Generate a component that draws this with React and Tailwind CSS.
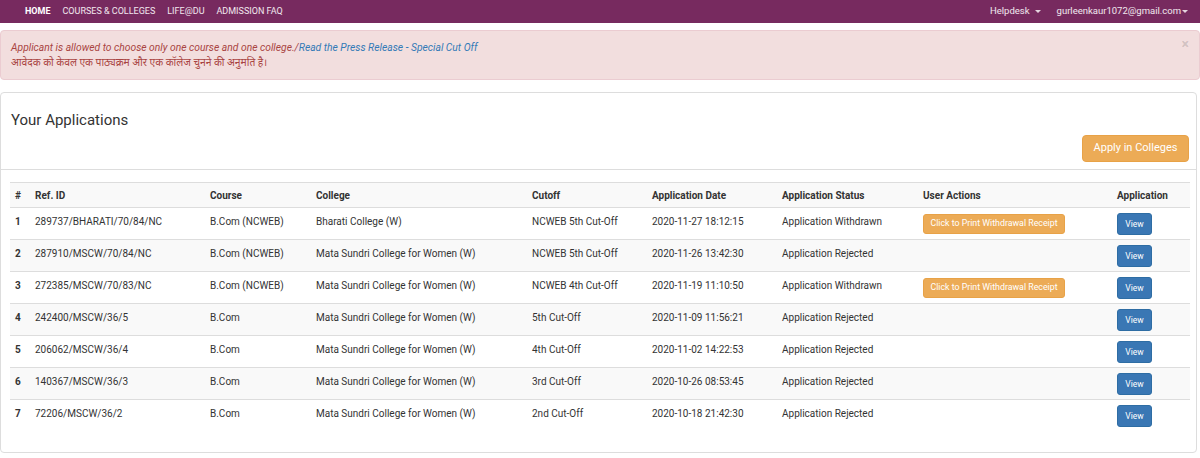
import { useState } from 'react';

// Bootstrap-3 flavoured "Your Applications" dashboard.

const NAV_LEFT = ['HOME', 'COURSES & COLLEGES', 'LIFE@DU', 'ADMISSION FAQ'];

const ROWS = [
  { ref: '289737/BHARATI/70/84/NC', course: 'B.Com (NCWEB)', college: 'Bharati College (W)', cutoff: 'NCWEB 5th Cut-Off', date: '2020-11-27 18:12:15', status: 'Application Withdrawn', receipt: true },
  { ref: '287910/MSCW/70/84/NC', course: 'B.Com (NCWEB)', college: 'Mata Sundri College for Women (W)', cutoff: 'NCWEB 5th Cut-Off', date: '2020-11-26 13:42:30', status: 'Application Rejected' },
  { ref: '272385/MSCW/70/83/NC', course: 'B.Com (NCWEB)', college: 'Mata Sundri College for Women (W)', cutoff: 'NCWEB 4th Cut-Off', date: '2020-11-19 11:10:50', status: 'Application Withdrawn', receipt: true },
  { ref: '242400/MSCW/36/5', course: 'B.Com', college: 'Mata Sundri College for Women (W)', cutoff: '5th Cut-Off', date: '2020-11-09 11:56:21', status: 'Application Rejected' },
  { ref: '206062/MSCW/36/4', course: 'B.Com', college: 'Mata Sundri College for Women (W)', cutoff: '4th Cut-Off', date: '2020-11-02 14:22:53', status: 'Application Rejected' },
  { ref: '140367/MSCW/36/3', course: 'B.Com', college: 'Mata Sundri College for Women (W)', cutoff: '3rd Cut-Off', date: '2020-10-26 08:53:45', status: 'Application Rejected' },
  { ref: '72206/MSCW/36/2', course: 'B.Com', college: 'Mata Sundri College for Women (W)', cutoff: '2nd Cut-Off', date: '2020-10-18 21:42:30', status: 'Application Rejected' },
];

const HEADS = ['#', 'Ref. ID', 'Course', 'College', 'Cutoff', 'Application Date', 'Application Status', 'User Actions', 'Application'];
const WIDTHS = [20, 175, 106, 216, 120, 130, 141, 194, 78];

function Caret({ gap = 'ml-[5px]' }) {
  return <span className={`inline-block ${gap} align-middle border-t-[3px] border-x-[3px] border-x-transparent border-t-white/80`} />;
}

export default function App() {
  const [showAlert, setShowAlert] = useState(true);

  return (
    <div className="w-[1200px] h-[458px] overflow-hidden bg-white text-[#333] font-['Roboto','Noto_Sans','Noto_Sans_Devanagari',sans-serif]">
      {/* Top navbar */}
      <nav className="h-[23px] bg-[#772a5f] flex items-center justify-between pl-[25px] pr-[12px] text-white text-[9px]">
        <div className="flex items-center gap-[12px]">
          {NAV_LEFT.map((n, i) => (
            <a key={n} className={i === 0 ? 'font-bold text-white' : 'text-white/90'}>{n}</a>
          ))}
        </div>
        <div className="flex items-center gap-[16px] text-[9.5px]">
          <a className="text-white/90">Helpdesk<Caret /></a>
          <a className="text-white/90">gurleenkaur1072@gmail.com<Caret gap="ml-[1px]" /></a>
        </div>
      </nav>

      <div className="pt-[7px]">
        {showAlert && (
          <div className="relative h-[50px] bg-[#f2dede] border border-[#ebccd1] rounded-[4px] pl-[10px] pt-[9px] italic text-[#a94442] text-[10.3px] leading-[15px]">
            <p>
              Applicant is allowed to choose only one course and one college./
              <a className="text-[#337ab7]">Read the Press Release - Special Cut Off</a>
            </p>
            <p>आवेदक को केवल एक पाठ्यक्रम और एक कॉलेज चुनने की अनुमति है।</p>
            <button
              onClick={() => setShowAlert(false)}
              className="absolute right-[10px] top-[6px] not-italic font-bold text-[14px] text-black/15"
            >
              ×
            </button>
          </div>
        )}

        {/* Applications panel */}
        <div className="mt-[12px] mr-[3px] border border-[#ddd] rounded-[4px] h-[361px]">
          <div className="h-[77px] border-b border-[#ddd] px-[10px] pt-[17px] flex flex-col">
            <h3 className="text-[15px] leading-[20px] text-[#333]">Your Applications</h3>
            <div className="flex justify-end mt-[5px]">
              <button className="h-[27px] w-[107px] -mr-[3px] rounded-[4px] bg-[#ecab56] border border-[#e8a247] text-white text-[11px]">
                Apply in Colleges
              </button>
            </div>
          </div>

          <div className="px-[9px] pt-[12px]">
            <table className="table-fixed w-[1180px] border-collapse text-[10px]">
              <colgroup>
                {WIDTHS.map((w, i) => <col key={i} style={{ width: w }} />)}
              </colgroup>
              <tbody>
                <tr className="h-[25px] bg-[#f9f9f9] border-t border-[#ddd]">
                  {HEADS.map(h => (
                    <td key={h} className="px-[5px] font-bold text-left align-middle">{h}</td>
                  ))}
                </tr>
                {ROWS.map((r, i) => (
                  <tr key={r.ref} className={`h-[32px] border-t border-[#ddd] ${i % 2 === 1 ? 'bg-[#f9f9f9]' : 'bg-white'}`}>
                    <td className="px-[5px] align-top pt-[6px] font-bold">{i + 1}</td>
                    <td className="px-[5px] align-top pt-[6px]">{r.ref}</td>
                    <td className="px-[5px] align-top pt-[6px]">{r.course}</td>
                    <td className="px-[5px] align-top pt-[6px]">{r.college}</td>
                    <td className="px-[5px] align-top pt-[6px]">{r.cutoff}</td>
                    <td className="px-[5px] align-top pt-[6px]">{r.date}</td>
                    <td className="px-[5px] align-top pt-[6px]">{r.status}</td>
                    <td className="px-[5px] align-top pt-[6px]">
                      {r.receipt && (
                        <button className="h-[20px] w-[142px] rounded-[3px] bg-[#ecab56] border border-[#e8a247] text-white text-[8.8px] whitespace-nowrap">
                          Click to Print Withdrawal Receipt
                        </button>
                      )}
                    </td>
                    <td className="px-[5px] align-top pt-[5px]">
                      <button className="h-[22px] w-[35px] rounded-[3px] bg-[#3a77b4] border border-[#2e6da4] text-white text-[8.5px]">
                        View
                      </button>
                    </td>
                  </tr>
                ))}
              </tbody>
            </table>
          </div>
        </div>
      </div>
    </div>
  );
}
